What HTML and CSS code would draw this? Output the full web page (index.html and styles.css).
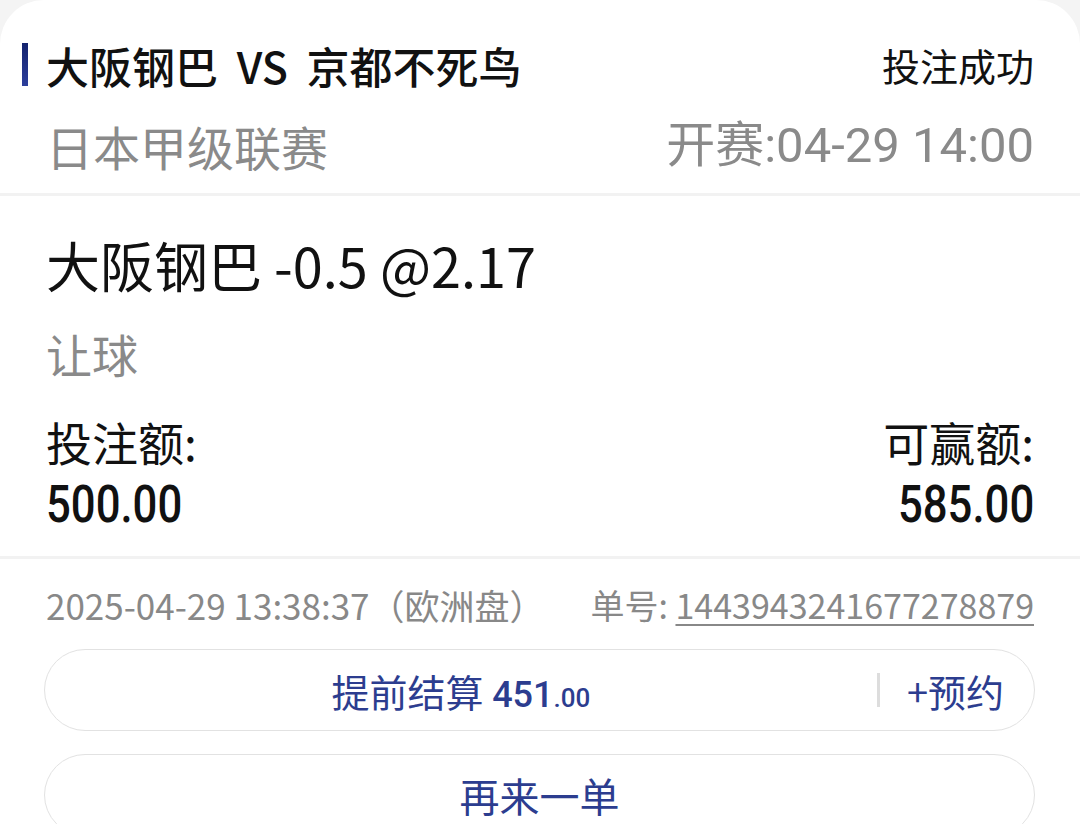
FILE: index.html
```html
<!DOCTYPE html>
<html lang="zh-CN">
<head>
    <meta charset="UTF-8">
    <meta name="viewport" content="width=device-width, initial-scale=1.0">
    <title>投注成功</title>
    <link rel="stylesheet" href="styles.css">
</head>
<body>
    <div class="card">
        <div class="head">
            <div class="row">
                <div class="match">大阪钢巴 VS 京都不死鸟</div>
                <div class="status">投注成功</div>
            </div>
            <div class="row sub">
                <div class="league">日本甲级联赛</div>
                <div class="kickoff">开赛:04-29 14:00</div>
            </div>
        </div>

        <div class="bet">
            <div class="pick">大阪钢巴 -0.5 @2.17</div>
            <div class="market">让球</div>
            <div class="amounts">
                <div class="amount">
                    <div class="label">投注额:</div>
                    <div class="value"><span>500.00</span></div>
                </div>
                <div class="amount right">
                    <div class="label">可赢额:</div>
                    <div class="value"><span>585.00</span></div>
                </div>
            </div>
        </div>

        <div class="foot">
            <div class="meta">
                <div class="time">2025-04-29 13:38:37（欧洲盘）</div>
                <div class="order">单号: <u>1443943241677278879</u></div>
            </div>
            <div class="btn cashout">
                <div class="main">提前结算 <b>451<small>.00</small></b></div>
                <div class="divider"></div>
                <div class="reserve">+预约</div>
            </div>
            <div class="btn again">再来一单</div>
        </div>
    </div>
</body>
</html>
```

FILE: styles.css
```css
body {
    margin: 0;
    background-color: #f4f4f4;
    font-family: 'Noto Sans CJK SC', 'Noto Sans', sans-serif;
    color: #111111;
}
.card {
    background-color: #ffffff;
    border-radius: 44px 44px 0 0;
    min-height: 824px;
}
.head {
    padding: 40px 46px 21px 46px;
    border-bottom: 3px solid #f2f2f2;
}
.row {
    display: flex;
    justify-content: space-between;
    align-items: center;
}
.match {
    position: relative;
    font-size: 43px;
    font-weight: 500;
    line-height: 50px;
    word-spacing: 9px;
}
.match::before {
    content: '';
    position: absolute;
    left: -24px;
    top: 3px;
    width: 6px;
    height: 43px;
    background: linear-gradient(#14236e, #2d3f9c);
}
.status {
    font-size: 38px;
    line-height: 50px;
}
.row.sub {
    margin-top: 30px;
    color: #8a8a8a;
    font-size: 47px;
    line-height: 52px;
}
.kickoff {
    font-family: 'Roboto', 'Noto Sans CJK SC', sans-serif;
    font-size: 49px;
}
.bet {
    padding: 39px 46px 24px 46px;
    border-bottom: 3px solid #f2f2f2;
}
.pick {
    font-size: 54px;
    line-height: 60px;
}
.market {
    margin-top: 31px;
    color: #8a8a8a;
    font-size: 46px;
    line-height: 54px;
}
.amounts {
    display: flex;
    justify-content: space-between;
    margin-top: 34px;
}
.label {
    font-size: 46px;
    line-height: 54px;
}
.value {
    margin-top: 10px;
    font-family: 'Roboto', sans-serif;
    font-size: 52px;
    font-weight: 500;
    line-height: 54px;
}
.value span {
    display: inline-block;
    transform: scaleX(0.84);
    transform-origin: left center;
}
.amount.right {
    text-align: right;
}
.amount.right .value span {
    transform-origin: right center;
}
.foot {
    padding: 26px 45px 0 44px;
}
.meta {
    display: flex;
    justify-content: space-between;
    color: #888888;
    font-size: 35px;
    line-height: 40px;
    padding: 0 1px 0 2px;
}
.order {
    font-size: 34px;
}
.order u {
    text-decoration-thickness: 2px;
    text-underline-offset: 5px;
}
.btn {
    height: 80px;
    border: 1px solid #e2e2e2;
    border-radius: 41px;
    color: #2c3d8f;
    font-size: 38px;
    display: flex;
    align-items: center;
}
.cashout {
    margin-top: 24px;
}
.cashout .main {
    flex: 1;
    text-align: center;
}
.cashout b {
    font-family: 'Roboto', sans-serif;
    font-weight: 500;
    font-size: 36px;
}
.cashout small {
    font-size: 26px;
}
.divider {
    width: 3px;
    height: 34px;
    background-color: #dddddd;
}
.reserve {
    padding: 0 30px 0 27px;
}
.again {
    margin-top: 23px;
    justify-content: center;
    font-size: 40px;
}
```
